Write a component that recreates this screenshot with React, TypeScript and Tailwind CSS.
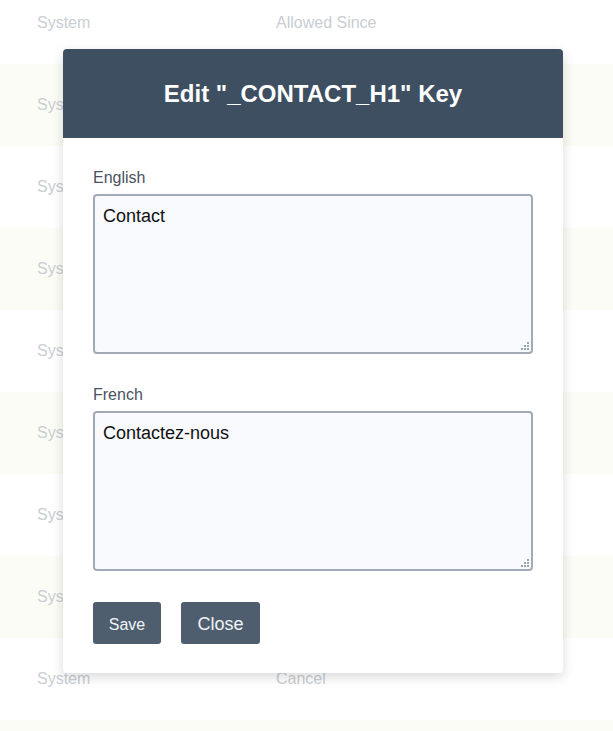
import React from "react";

const rows = [
  { system: "System", value: "Allowed Since" },
  { system: "System", value: "" },
  { system: "System", value: "" },
  { system: "System", value: "" },
  { system: "System", value: "" },
  { system: "System", value: "" },
  { system: "System", value: "" },
  { system: "System", value: "" },
  { system: "System", value: "Cancel" },
  { system: "", value: "" },
];

function Grip() {
  // little dotted resize handle in the textarea corner
  return (
    <svg
      className="absolute right-[4px] bottom-[4px] pointer-events-none"
      width="8"
      height="8"
      viewBox="0 0 8 8"
    >
      <rect x="6" y="0" width="2" height="2" fill="#9aa2ab" />
      <rect x="3" y="3" width="2" height="2" fill="#9aa2ab" />
      <rect x="6" y="3" width="2" height="2" fill="#9aa2ab" />
      <rect x="0" y="6" width="2" height="2" fill="#9aa2ab" />
      <rect x="3" y="6" width="2" height="2" fill="#9aa2ab" />
      <rect x="6" y="6" width="2" height="2" fill="#9aa2ab" />
    </svg>
  );
}

function Field({ label, value, className = "" }: { label: string; value: string; className?: string }) {
  return (
    <div className={`flex flex-col ${className}`}>
      <label className="text-[16px] leading-[24px] text-[#4a5260] mb-1">{label}</label>
      <div className="relative w-[440px] h-[160px]">
        <textarea
          defaultValue={value}
          className="h-full w-full resize-none border-2 border-[#a2abb5] rounded-[4px] bg-[#f9fafe] px-[8px] py-[7px] text-[18px] text-[#111] outline-none"
        />
        <Grip />
      </div>
    </div>
  );
}

export default function App() {
  return (
    <div
      className="relative w-[613px] h-[731px] overflow-hidden bg-white"
      style={{ fontFamily: '"Liberation Sans", Arial, sans-serif' }}
    >
      {/* Background table */}
      <div className="-mt-[18px] flex flex-col">
        {rows.map((r, i) => (
          <div
            key={i}
            className={`h-[82px] flex items-center text-[16px] text-[#c9ced3] ${
              i % 2 === 1 ? "bg-[#fafcf5]" : "bg-white"
            }`}
          >
            <span className="w-[276px] pl-[37px]">{r.system}</span>
            <span>{r.value}</span>
          </div>
        ))}
      </div>

      {/* Modal */}
      <div className="absolute left-[63px] top-[49px] w-[500px] bg-white rounded-[4px] shadow-[0_4px_12px_rgba(0,0,0,0.15)] overflow-hidden">
        <div className="h-[89px] bg-[#3e4f61] flex items-center justify-center">
          <h2 className="text-white text-[24px] font-bold">Edit "_CONTACT_H1" Key</h2>
        </div>

        <div className="pt-[28px] px-[30px] pb-[29px] flex flex-col">
          <Field label="English" value="Contact" />
          <Field label="French" value="Contactez-nous" className="mt-[29px]" />

          <div className="mt-[31px] flex items-center gap-[20px]">
            <button className="h-[42px] w-[68px] pt-[3px] bg-[#4f5e6f] text-[#f0f4f8] text-[16px] rounded-[3px]">
              Save
            </button>
            <button className="h-[42px] w-[79px] pt-[3px] bg-[#4f5e6f] text-[#f0f4f8] text-[18px] rounded-[3px]">
              Close
            </button>
          </div>
        </div>
      </div>
    </div>
  );
}
